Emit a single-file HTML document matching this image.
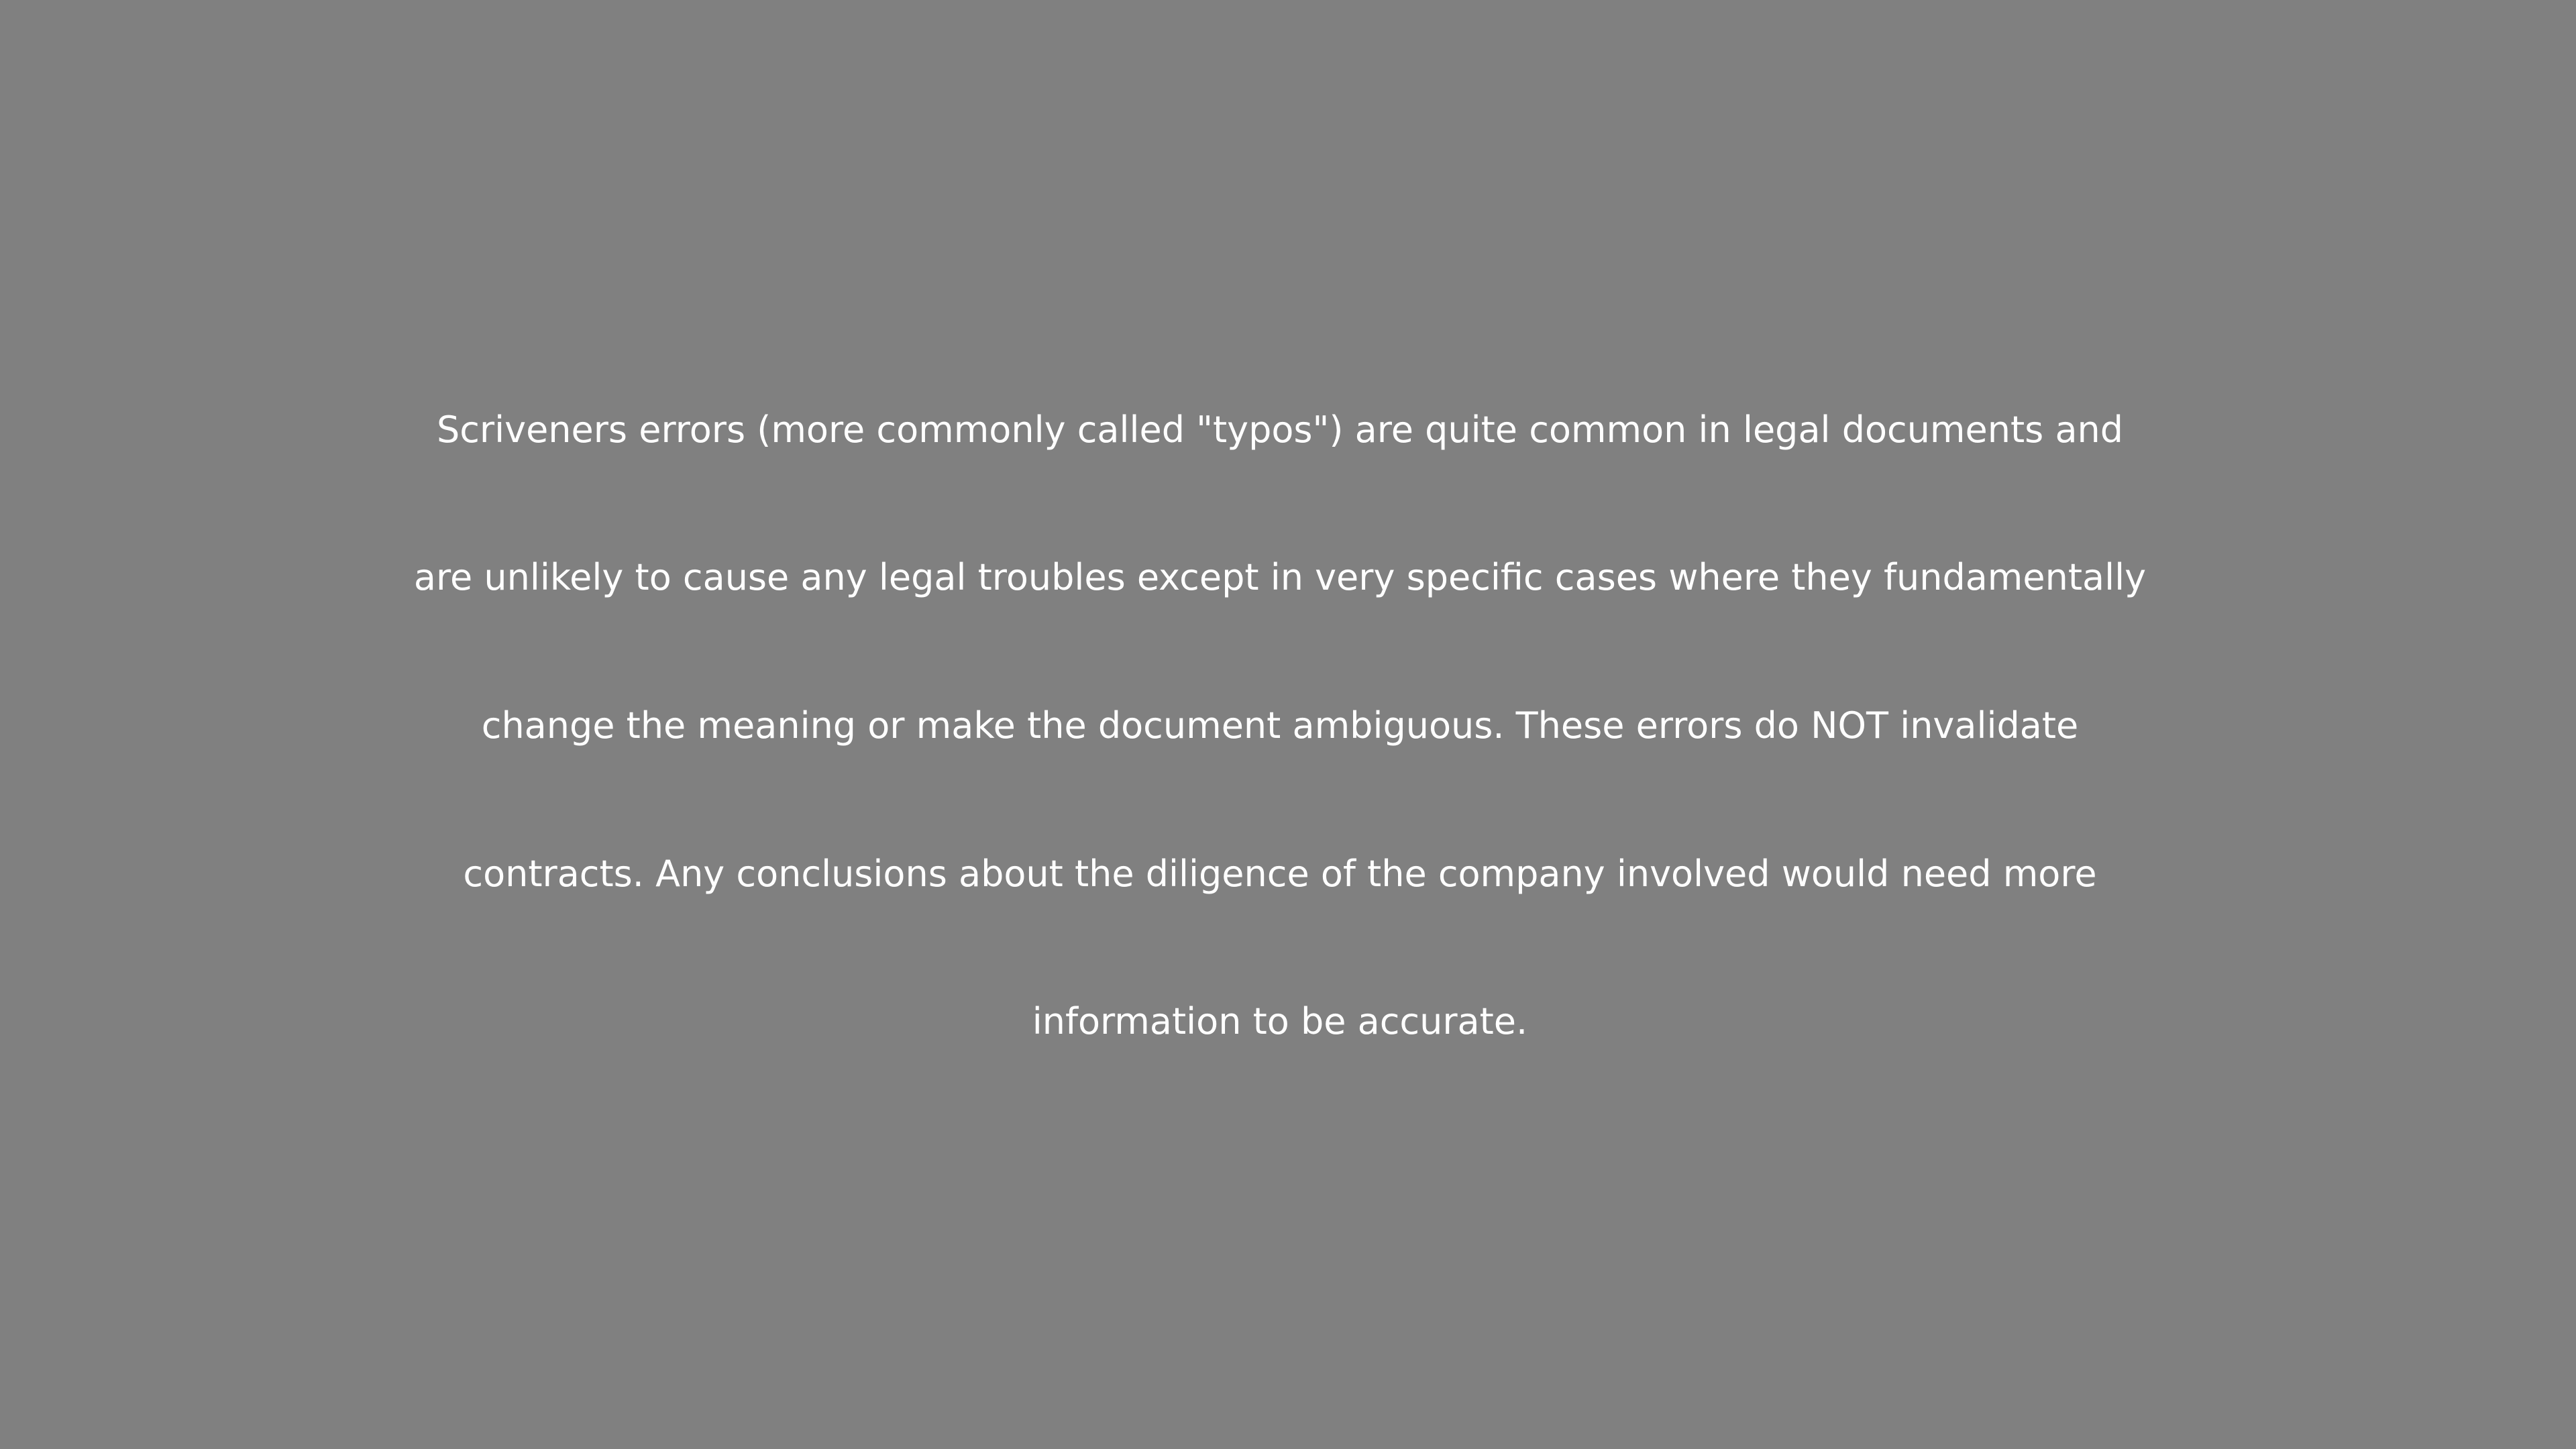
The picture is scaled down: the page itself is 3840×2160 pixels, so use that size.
<!DOCTYPE html>
<html><head><style>
html,body{margin:0;padding:0;}
body{width:3840px;height:2160px;background:#808080;position:relative;overflow:hidden;}
.l{position:absolute;left:-12px;width:3840px;text-align:center;color:#fff;font-family:"DejaVu Sans","Liberation Sans",sans-serif;font-size:54px;line-height:80px;white-space:nowrap;}
</style></head><body>
<div class="l" style="top:601px">Scriveners errors (more commonly called "typos") are quite common in legal documents and</div>
<div class="l" style="top:821px">are unlikely to cause any legal troubles except in very specific cases where they fundamentally</div>
<div class="l" style="top:1042px">change the meaning or make the document ambiguous. These errors do NOT invalidate</div>
<div class="l" style="top:1263px">contracts. Any conclusions about the diligence of the company involved would need more</div>
<div class="l" style="top:1483px">information to be accurate.</div>
</body></html>
